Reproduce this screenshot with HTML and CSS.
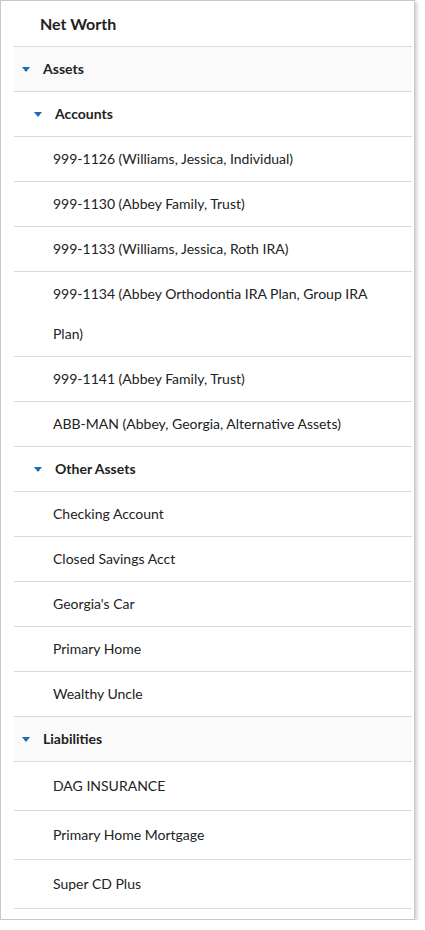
FILE: index.html
```html
<!DOCTYPE html>
<html lang="en">
<head>
    <meta charset="UTF-8">
    <meta name="viewport" content="width=device-width, initial-scale=1.0">
    <title>Net Worth</title>
    <link rel="stylesheet" href="styles.css">
</head>
<body>
    <div class="panel">
        <div class="title">Net Worth</div>
        <ul class="tree">
            <li class="row group"><span class="caret"></span>Assets</li>
            <li class="row sub"><span class="caret"></span>Accounts</li>
            <li class="row item">999-1126 (Williams, Jessica, Individual)</li>
            <li class="row item">999-1130 (Abbey Family, Trust)</li>
            <li class="row item">999-1133 (Williams, Jessica, Roth IRA)</li>
            <li class="row item">999-1134 (Abbey Orthodontia IRA Plan, Group IRA Plan)</li>
            <li class="row item">999-1141 (Abbey Family, Trust)</li>
            <li class="row item">ABB-MAN (Abbey, Georgia, Alternative Assets)</li>
            <li class="row sub"><span class="caret"></span>Other Assets</li>
            <li class="row item">Checking Account</li>
            <li class="row item">Closed Savings Acct</li>
            <li class="row item">Georgia's Car</li>
            <li class="row item">Primary Home</li>
            <li class="row item">Wealthy Uncle</li>
            <li class="row group"><span class="caret"></span>Liabilities</li>
            <li class="row item tall">DAG INSURANCE</li>
            <li class="row item tall">Primary Home Mortgage</li>
            <li class="row item tall">Super CD Plus</li>
        </ul>
    </div>
</body>
</html>
```

FILE: styles.css
```css
body {
    font-family: Lato, "Liberation Sans", sans-serif;
    background-color: #ffffff;
    color: #222;
    margin: 0;
    padding: 0;
}
.panel {
    width: 415px;
    min-height: 920px;
    border: 1px solid #c8c8c8;
    box-shadow: 2px 2px 4px rgba(0, 0, 0, 0.2);
    padding: 0 2px 10px 13px;
    box-sizing: border-box;
}
.title {
    font-size: 16px;
    font-weight: 700;
    line-height: 45px;
    padding-left: 26px;
    border-bottom: 1px solid #d9d9d9;
}
.tree {
    list-style: none;
    margin: 0;
    padding: 0;
}
.row {
    font-size: 14px;
    line-height: 40px;
    padding-top: 2px;
    padding-bottom: 2px;
    padding-right: 30px;
    border-bottom: 1px solid #d9d9d9;
}
.row.tall {
    padding-top: 4px;
    padding-bottom: 4px;
}
.group {
    background-color: #fafafa;
    font-weight: 700;
    padding-left: 8px;
}
.sub {
    font-weight: 700;
    padding-left: 20px;
}
.item {
    padding-left: 39px;
}
.caret {
    display: inline-block;
    width: 0;
    height: 0;
    border-left: 4px solid transparent;
    border-right: 4px solid transparent;
    border-top: 5px solid #1b6bb5;
    vertical-align: middle;
    margin-right: 13px;
    position: relative;
    top: -1px;
}
```
